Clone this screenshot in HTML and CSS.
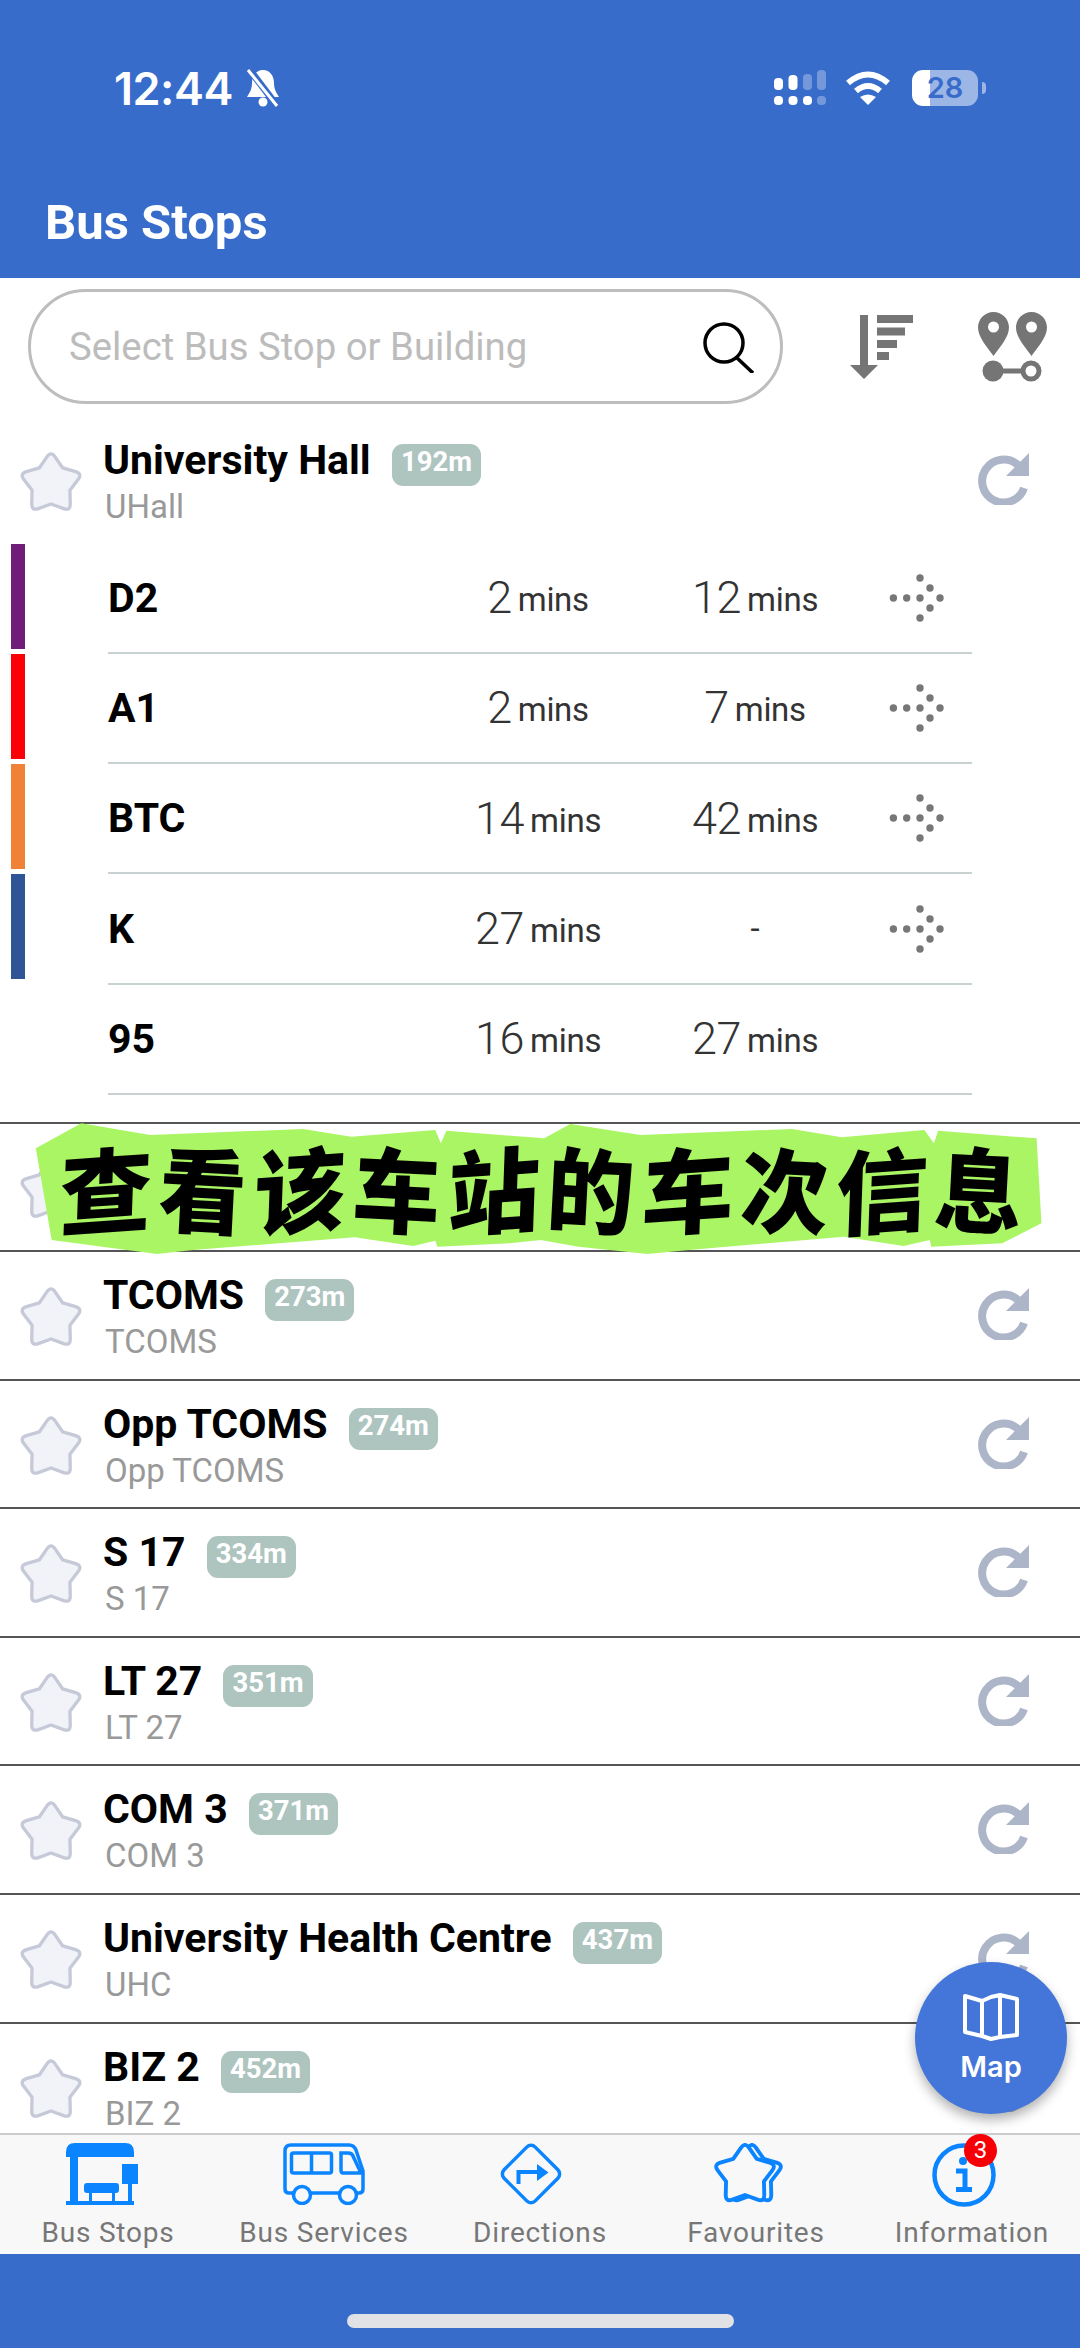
FILE: index.html
```html
<!DOCTYPE html>
<html lang="en">
  <head>
    <meta charset="UTF-8" />
    <meta name="viewport" content="width=device-width, initial-scale=1.0" />
    <title>Bus Stops</title>
    <link rel="stylesheet" href="styles.css">
  </head>
  <body>
    <svg class="defs" width="0" height="0">
      <symbol id="star" viewBox="3 3 56 54" overflow="visible">
        <path d="M27.3 6.4Q31 1 34.7 6.4L41.6 16.4L53.2 19.8Q59.5 21.7 55.5 26.9L48.1 36.6L48.4 48.8Q48.6 55.3 42.400 53.100L31 49L19.6 53.100Q13.4 55.3 13.6 48.8L13.9 36.6L6.5 26.9Q2.5 21.7 8.8 19.8L20.4 16.4Z" stroke-linejoin="round"/>
      </symbol>
      <symbol id="refresh" viewBox="0 0 52 52">
        <path d="M41 12A21.5 21.5 0 1 0 47 35" fill="none" stroke="#adb5c8" stroke-width="8"/>
        <path d="M52 0V23H29Z" fill="#adb5c8"/>
      </symbol>
      <symbol id="dots" viewBox="0 0 60 50">
        <g fill="#777">
          <circle cx="6.4" cy="25" r="3.7"/><circle cx="19.7" cy="25" r="3.7"/><circle cx="33" cy="25" r="3.7"/><circle cx="53" cy="25" r="3.7"/>
          <circle cx="33" cy="5" r="3.7"/><circle cx="43" cy="15" r="3.7"/><circle cx="43" cy="35" r="3.7"/><circle cx="33" cy="45" r="3.7"/>
        </g>
      </symbol>
    </svg>

    <div class="app">
      <header class="top">
        <div class="status">
          <span class="time">12:44</span>
          <svg class="bell" width="36" height="40" viewBox="0 0 36 40">
            <path d="M18 2C11 2 7 8 7 15C7 21 5 24 2 29H34C31 24 29 21 29 15C29 8 25 2 18 2Z" fill="#fff"/>
            <circle cx="18" cy="34" r="4.5" fill="#fff"/>
            <path d="M4 1L33 39" stroke="#386ccb" stroke-width="7"/>
            <path d="M3 2L32 38" stroke="#fff" stroke-width="3"/>
          </svg>
          <div class="status-right">
            <svg width="54" height="36" viewBox="0 0 54 36">
              <g fill="#fff">
                <rect x="0" y="8" width="9" height="12" rx="4"/><rect x="14.500" y="5" width="9" height="15" rx="4"/>
                <rect x="0" y="26" width="9" height="9" rx="4"/><rect x="14.500" y="26" width="9" height="9" rx="4"/><rect x="29" y="26" width="9" height="9" rx="4"/>
              </g>
              <g fill="#fff" opacity="0.3">
                <rect x="29" y="4" width="9" height="16" rx="4"/><rect x="43" y="0" width="9" height="20" rx="4"/><rect x="43" y="26" width="9" height="9" rx="4"/>
              </g>
            </svg>
            <svg class="wifi" width="46" height="34" viewBox="0 0 46 34">
              <path d="M3 12Q23 -5 43 12M11 20Q23 10 35 20" fill="none" stroke="#fff" stroke-width="6"/>
              <path d="M15 26Q23 21 31 26L23 34Z" fill="#fff"/>
            </svg>
            <div class="battery">28</div>
          </div>
        </div>
        <h1 class="title">Bus Stops</h1>
      </header>

      <div class="search-row">
        <div class="search">
          <span class="search-text">Select Bus Stop or Building</span>
          <svg width="52" height="52" viewBox="0 0 52 52">
            <circle cx="22" cy="22" r="19" fill="none" stroke="#000" stroke-width="3.500"/>
            <path d="M34 36L51 52" stroke="#000" stroke-width="3.500"/>
          </svg>
        </div>
        <svg class="sort-icon" width="63" height="64" viewBox="0 0 63 64">
          <g fill="#757575">
            <path d="M10 0H18V50H28L14 64L0 50H10Z"/>
            <rect x="27" y="0" width="36" height="8"/><rect x="27" y="12.500" width="28" height="8"/>
            <rect x="27" y="25" width="20" height="8"/><rect x="27" y="37" width="12" height="8"/>
          </g>
        </svg>
        <svg class="route-icon" width="69" height="70" viewBox="0 0 69 70">
          <g fill="#757575">
            <path d="M15.500 0C24 0 31 7 31 15.500C31 25 22 35 15.500 44C9 35 0 25 0 15.500C0 7 7 0 15.500 0Z"/>
            <path d="M53.500 0C62 0 69 7 69 15.500C69 25 60 35 53.500 44C47 35 38 25 38 15.500C38 7 45 0 53.500 0Z"/>
            <circle cx="15" cy="59" r="10.500"/>
            <rect x="20" y="56.500" width="26" height="5"/>
          </g>
          <circle cx="15.500" cy="15" r="5.500" fill="#fff"/>
          <circle cx="53.500" cy="15" r="5.500" fill="#fff"/>
          <circle cx="53" cy="59" r="8" fill="#fff" stroke="#757575" stroke-width="5"/>
        </svg>
      </div>

      <main class="list">
        <section class="expanded">
          <div class="stop stop-open">
            <svg class="star"><use href="#star"/></svg>
            <div class="stop-text">
              <div class="stop-name">University Hall <span class="badge">192m</span></div>
              <div class="stop-code">UHall</div>
            </div>
            <svg class="refresh"><use href="#refresh"/></svg>
          </div>

          <div class="service">
            <span class="bar bar-purple"></span>
            <div class="service-body">
              <span class="service-name">D2</span>
              <span class="eta"><b>2</b> mins</span>
              <span class="eta"><b>12</b> mins</span>
              <svg class="dots"><use href="#dots"/></svg>
            </div>
          </div>
          <div class="service">
            <span class="bar bar-red"></span>
            <div class="service-body">
              <span class="service-name">A1</span>
              <span class="eta"><b>2</b> mins</span>
              <span class="eta"><b>7</b> mins</span>
              <svg class="dots"><use href="#dots"/></svg>
            </div>
          </div>
          <div class="service">
            <span class="bar bar-orange"></span>
            <div class="service-body">
              <span class="service-name">BTC</span>
              <span class="eta"><b>14</b> mins</span>
              <span class="eta"><b>42</b> mins</span>
              <svg class="dots"><use href="#dots"/></svg>
            </div>
          </div>
          <div class="service">
            <span class="bar bar-blue"></span>
            <div class="service-body">
              <span class="service-name">K</span>
              <span class="eta"><b>27</b> mins</span>
              <span class="eta">-</span>
              <svg class="dots"><use href="#dots"/></svg>
            </div>
          </div>
          <div class="service">
            <span class="bar"></span>
            <div class="service-body">
              <span class="service-name">95</span>
              <span class="eta"><b>16</b> mins</span>
              <span class="eta"><b>27</b> mins</span>
            </div>
          </div>
        </section>

        <div class="stop">
          <svg class="star"><use href="#star"/></svg>
          <div class="stop-text">
            <div class="stop-name">Opp UHall <span class="badge">201m</span></div>
            <div class="stop-code">Opp UHall</div>
          </div>
          <svg class="refresh"><use href="#refresh"/></svg>
        </div>
        <div class="stop">
          <svg class="star"><use href="#star"/></svg>
          <div class="stop-text">
            <div class="stop-name">TCOMS <span class="badge">273m</span></div>
            <div class="stop-code">TCOMS</div>
          </div>
          <svg class="refresh"><use href="#refresh"/></svg>
        </div>
        <div class="stop">
          <svg class="star"><use href="#star"/></svg>
          <div class="stop-text">
            <div class="stop-name">Opp TCOMS <span class="badge">274m</span></div>
            <div class="stop-code">Opp TCOMS</div>
          </div>
          <svg class="refresh"><use href="#refresh"/></svg>
        </div>
        <div class="stop">
          <svg class="star"><use href="#star"/></svg>
          <div class="stop-text">
            <div class="stop-name">S 17 <span class="badge">334m</span></div>
            <div class="stop-code">S 17</div>
          </div>
          <svg class="refresh"><use href="#refresh"/></svg>
        </div>
        <div class="stop">
          <svg class="star"><use href="#star"/></svg>
          <div class="stop-text">
            <div class="stop-name">LT 27 <span class="badge">351m</span></div>
            <div class="stop-code">LT 27</div>
          </div>
          <svg class="refresh"><use href="#refresh"/></svg>
        </div>
        <div class="stop">
          <svg class="star"><use href="#star"/></svg>
          <div class="stop-text">
            <div class="stop-name">COM 3 <span class="badge">371m</span></div>
            <div class="stop-code">COM 3</div>
          </div>
          <svg class="refresh"><use href="#refresh"/></svg>
        </div>
        <div class="stop">
          <svg class="star"><use href="#star"/></svg>
          <div class="stop-text">
            <div class="stop-name">University Health Centre <span class="badge">437m</span></div>
            <div class="stop-code">UHC</div>
          </div>
          <svg class="refresh"><use href="#refresh"/></svg>
        </div>
        <div class="stop">
          <svg class="star"><use href="#star"/></svg>
          <div class="stop-text">
            <div class="stop-name">BIZ 2 <span class="badge">452m</span></div>
            <div class="stop-code">BIZ 2</div>
          </div>
          <svg class="refresh"><use href="#refresh"/></svg>
        </div>
      </main>

      <nav class="tabs">
        <div class="tab tab-stops">
          <svg width="72" height="62" viewBox="0 0 72 62">
            <g fill="#0a84ff">
              <path d="M0 14V9Q0 0 9 0H59Q68 0 68 9V14Z"/>
              <rect x="4" y="13" width="8" height="47"/>
              <rect x="0" y="58" width="68" height="4"/>
              <rect x="18" y="40" width="35" height="10" rx="3"/>
              <rect x="23" y="49" width="3" height="10"/><rect x="46" y="49" width="3" height="10"/>
              <rect x="56" y="21" width="16" height="20"/>
              <rect x="62" y="40" width="4" height="20"/>
            </g>
          </svg>
          <span class="tab-label">Bus Stops</span>
        </div>
        <div class="tab tab-services">
          <svg width="82" height="62" viewBox="0 0 82 62">
            <g fill="none" stroke="#0a84ff" stroke-width="3.500">
              <path d="M10 50H6Q2 50 2 46V8Q2 2 8 2H66Q71 2 73 7L80 28V46Q80 50 76 50H74M28 50H56"/>
              <circle cx="19" cy="52" r="8.500"/>
              <circle cx="65" cy="52" r="8.500"/>
              <rect x="8.500" y="10" width="40" height="20" rx="2"/>
              <path d="M28.500 10V30M58 10H65Q69 10 70 13L78 30H60Q58 30 58 27Z"/>
            </g>
          </svg>
          <span class="tab-label">Bus Services</span>
        </div>
        <div class="tab tab-directions">
          <svg width="62" height="62" viewBox="0 0 62 62">
            <rect x="9" y="9" width="44" height="44" rx="6" transform="rotate(45 31 31)" fill="none" stroke="#0a84ff" stroke-width="3.500"/>
            <path d="M18.500 41V29H39" fill="none" stroke="#0a84ff" stroke-width="4"/>
            <path d="M37 21L48.500 29.500L37 38Z" fill="#0a84ff"/>
          </svg>
          <span class="tab-label">Directions</span>
        </div>
        <div class="tab tab-favourites">
          <svg class="fav-icon" width="70" height="62" viewBox="0 0 70 62">
            <use class="fav-back" href="#star" x="7" y="1" width="62" height="60"/>
            <use class="fav-front" href="#star" x="0" y="1" width="62" height="60"/>
          </svg>
          <span class="tab-label">Favourites</span>
        </div>
        <div class="tab tab-info">
          <div class="info-icon">
            <svg width="64" height="64" viewBox="0 0 64 64">
              <circle cx="32" cy="32" r="29.500" fill="none" stroke="#0a84ff" stroke-width="4.500"/>
              <circle cx="31" cy="18" r="4" fill="#0a84ff"/>
              <path d="M24 28H33V46M24 46.500H40" fill="none" stroke="#0a84ff" stroke-width="5"/>
            </svg>
            <span class="info-badge">3</span>
          </div>
          <span class="tab-label">Information</span>
        </div>
      </nav>

      <div class="home-area"><span class="home-bar"></span></div>

      <button class="map-fab">
        <svg width="58" height="48" viewBox="0 0 58 48">
          <path d="M3 3L20 8L29 4L38 2L55 6V42L38 44L29 46L20 43L3 39ZM20 8V43M38 2V44" fill="none" stroke="#fff" stroke-width="4" stroke-linejoin="round"/>
        </svg>
        <span>Map</span>
      </button>

      <div class="sticker">
        <svg class="sticker-bg" viewBox="0 0 1568 600" preserveAspectRatio="none">
          <polygon fill="#aaf564" points="52,205 118,130 218,165 440,147 510,170 632,150 640,190 648,152 790,175 828,132 930,165 1150,147 1222,172 1342,150 1356,190 1362,152 1505,175 1512,430 1455,490 1352,500 1350,480 1312,498 1225,470 1000,510 940,522 840,500 785,480 740,490 635,500 632,482 600,498 515,472 280,510 228,522 75,480"/>
        </svg>
        <div class="sticker-text"><span>查</span><span>看</span><span>该</span><span>车</span><span>站</span><span>的</span><span>车</span><span>次</span><span>信</span><span>息</span></div>
      </div>
    </div>
  </body>
</html>
```
FILE: styles.css
```css
body {
  margin: 0;
  font-family: Roboto, "Noto Sans", sans-serif;
  background: #fff;
  overflow: hidden;
}

.defs {
  position: absolute;
}

.app {
  width: 1080px;
  height: 2348px;
  display: flex;
  flex-direction: column;
  position: relative;
  overflow: hidden;
}

/* header */
.top {
  height: 278px;
  flex: none;
  background: #386ccb;
  color: #fff;
  box-sizing: border-box;
  padding-top: 65px;
}

.status {
  display: flex;
  align-items: center;
  height: 46px;
  padding-left: 114px;
}

.time {
  font-family: Inter, sans-serif;
  font-size: 45px;
  font-weight: 600;
  letter-spacing: -0.5px;
}

.bell {
  margin-left: 12px;
}

.status-right {
  margin-left: auto;
  margin-right: 102px;
  display: flex;
  align-items: center;
  gap: 15px;
}

.wifi {
  margin: 0 6px 0 2px;
}

.battery {
  width: 66px;
  height: 36px;
  border-radius: 11px;
  background: linear-gradient(90deg, #fff 27%, rgba(255,255,255,0.5) 27%);
  color: #386ccb;
  font-family: Inter, sans-serif;
  font-size: 29px;
  font-weight: 600;
  line-height: 36px;
  text-align: center;
  position: relative;
}

.battery::after {
  content: "";
  position: absolute;
  right: -8px;
  top: 12px;
  width: 4px;
  height: 12px;
  border-radius: 0 4px 4px 0;
  background: rgba(255,255,255,0.5);
}

.title {
  margin: 0;
  padding: 84px 0 0 45px;
  font-size: 49px;
  line-height: 56px;
  font-weight: 700;
}

/* search */
.search-row {
  height: 139px;
  flex: none;
  box-sizing: border-box;
  padding: 11px 0 0 28px;
  display: flex;
  align-items: flex-start;
}

.search {
  width: 755px;
  height: 115px;
  box-sizing: border-box;
  border: 3px solid #bdbdbd;
  border-radius: 58px;
  display: flex;
  align-items: center;
  justify-content: space-between;
  padding: 0 26px 0 38px;
}

.search-text {
  font-size: 38.3px;
  color: #bcbcbc;
}

.sort-icon {
  margin: 26px 0 0 67px;
}

.route-icon {
  margin: 23px 0 0 65px;
}

/* stops */
.list {
  flex: 1;
  overflow: hidden;
}

.expanded {
  height: 706.5px;
  border-bottom: 2px solid #555;
  box-sizing: border-box;
}

.stop {
  height: 128.6px;
  box-sizing: border-box;
  border-bottom: 2px solid #555;
  display: flex;
  align-items: flex-start;
  position: relative;
}

.stop-open {
  height: 126.5px;
  border-bottom: none;
}

.star {
  width: 62px;
  height: 60px;
  flex: none;
  margin: 36px 0 0 20px;
  fill: #f1f3f8;
  stroke: #c6cad8;
  stroke-width: 3;
  overflow: visible;
}

.stop-text {
  margin: 20px 0 0 21px;
}

.stop-name {
  font-size: 41px;
  font-weight: 700;
  line-height: 47px;
  color: #000;
  display: flex;
  align-items: flex-start;
  white-space: pre;
}

.badge {
  height: 42px;
  box-sizing: border-box;
  margin: 7px 0 0 11px;
  padding: 0 9px;
  border-radius: 11px;
  background: #aec4bf;
  color: #fff;
  font-size: 27.5px;
  font-weight: 700;
  line-height: 35px;
}

.stop-code {
  margin: 0 0 0 2px;
  font-size: 33px;
  line-height: 41px;
  color: #999;
}

.refresh {
  width: 52px;
  height: 52px;
  margin: 36px 51px 0 auto;
}

/* services under the open stop */
.service {
  height: 110.3px;
  display: flex;
}

.bar {
  width: 14px;
  height: 105px;
  flex: none;
  margin: 0 83px 0 11px;
}

.bar-purple { background: #6f1d78; }
.bar-red { background: #fb0006; }
.bar-orange { background: #ef8236; }
.bar-blue { background: #2f5597; }

.service-body {
  width: 864px;
  box-sizing: border-box;
  border-bottom: 2px solid #c9d2d2;
  display: grid;
  grid-template-columns: 330px 200px 234px 90px;
  align-items: center;
}

.service-name {
  font-size: 41px;
  font-weight: 700;
  color: #000;
}

.eta {
  font-size: 33px;
  color: #333;
  text-align: center;
  letter-spacing: -0.3px;
}

.eta b {
  font-size: 45px;
  font-weight: 300;
  margin-right: -2px;
  vertical-align: -2px;
}

.dots {
  width: 60px;
  height: 50px;
  margin-left: 15px;
}

/* tab bar */
.tabs {
  height: 121px;
  flex: none;
  box-sizing: border-box;
  border-top: 2px solid #ccc;
  background: #f8f8f8;
  display: flex;
}

.tab {
  flex: 1;
  display: flex;
  flex-direction: column;
  align-items: center;
  padding: 8px 0 5px;
  position: relative;
}

.tab svg {
  display: block;
}

.tab-stops svg { margin-right: 12px; }
.tab-directions svg { margin-right: 18px; }
.tab-favourites svg { margin-right: 14px; }
.info-icon { margin-right: 16px; position: relative; }

.tab-label {
  margin-top: auto;
  font-family: Roboto, sans-serif;
  font-size: 28px;
  line-height: 32px;
  letter-spacing: 0.8px;
  color: #777;
  white-space: nowrap;
}

.fav-icon {
  fill: none;
  stroke: #0a84ff;
  stroke-width: 3.5;
}

.fav-front {
  fill: #f8f8f8;
}

.info-badge {
  position: absolute;
  top: -9px;
  right: -1px;
  width: 33px;
  height: 33px;
  border-radius: 50%;
  background: #f60006;
  color: #fff;
  font-size: 24px;
  line-height: 33px;
  text-align: center;
}

.home-area {
  height: 94px;
  flex: none;
  background: #386ccb;
  display: flex;
  justify-content: center;
}

.home-bar {
  width: 387px;
  height: 14px;
  margin-top: 60px;
  border-radius: 7px;
  background: #e0e2e5;
}

/* floating things */
.map-fab {
  position: absolute;
  left: 915px;
  top: 1962px;
  width: 152px;
  height: 152px;
  padding: 0;
  border: none;
  border-radius: 50%;
  background: #4476d9;
  color: #fff;
  box-shadow: 0 6px 12px rgba(0,0,0,0.3);
  font-family: Inter, sans-serif;
  font-size: 29px;
  font-weight: 600;
  display: flex;
  flex-direction: column;
  align-items: center;
  justify-content: center;
  gap: 8px;
}

.sticker {
  position: absolute;
  left: 0;
  top: 1080px;
  width: 1080px;
  height: 200px;
}

.sticker-bg {
  position: absolute;
  left: 0;
  top: 0;
  width: 100%;
  height: 100%;
}

.sticker-text {
  position: absolute;
  left: 60px;
  top: 54px;
  display: flex;
  gap: 5px;
  font-family: "Noto Sans CJK SC", sans-serif;
  font-size: 92px;
  line-height: 104px;
  font-weight: 900;
  color: #000;
}

.sticker-text span {
  display: block;
  transform: rotate(-4deg) skewX(-6deg);
}

.sticker-text span:nth-child(even) {
  transform: rotate(3deg) scaleX(0.95);
}
```
